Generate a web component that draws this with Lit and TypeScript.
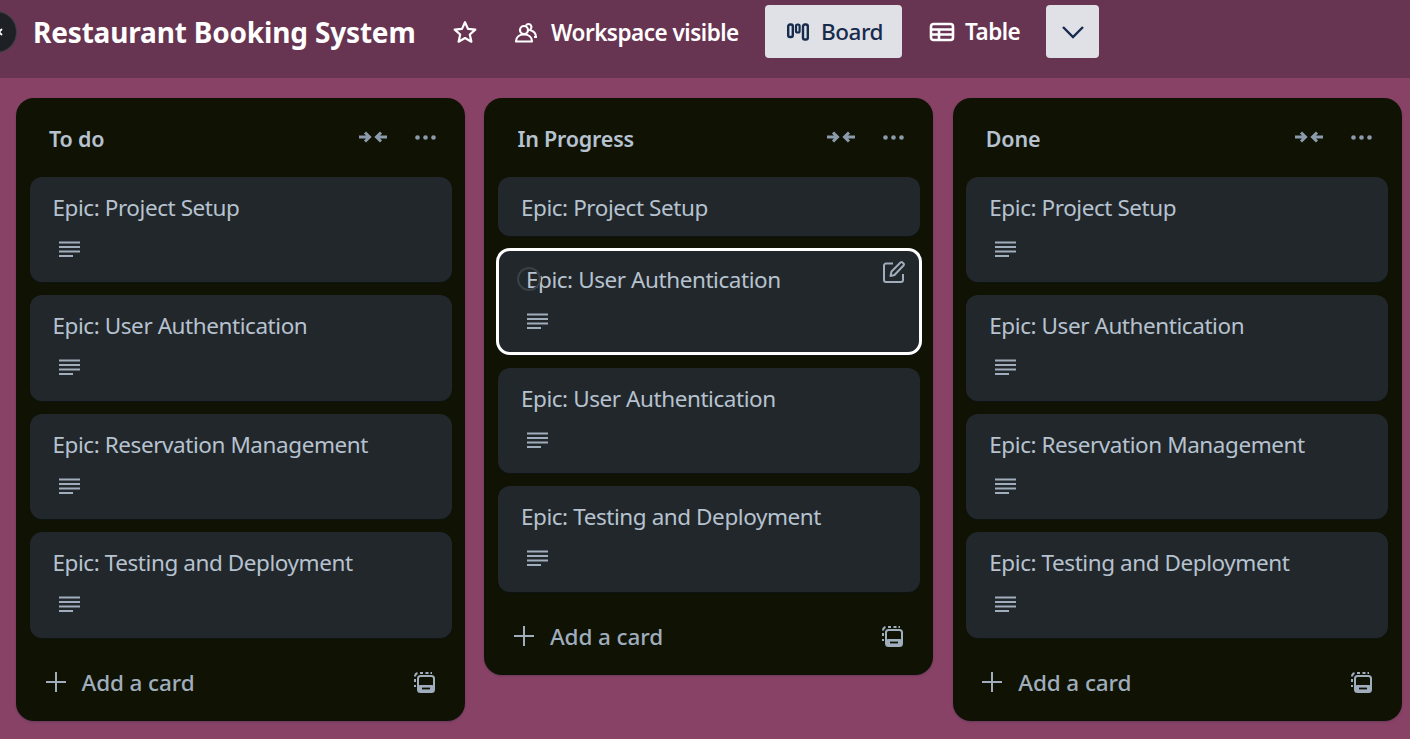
import { LitElement, html, css, svg } from 'lit';
import { customElement } from 'lit/decorators.js';

const lists = [
    { title: 'To do', cards: [
        { name: 'Epic: Project Setup', desc: true },
        { name: 'Epic: User Authentication', desc: true },
        { name: 'Epic: Reservation Management', desc: true },
        { name: 'Epic: Testing and Deployment', desc: true },
    ] },
    { title: 'In Progress', cards: [
        { name: 'Epic: Project Setup', desc: false },
        { name: 'Epic: User Authentication', desc: true, active: true },
        { name: 'Epic: User Authentication', desc: true },
        { name: 'Epic: Testing and Deployment', desc: true },
    ] },
    { title: 'Done', cards: [
        { name: 'Epic: Project Setup', desc: true },
        { name: 'Epic: User Authentication', desc: true },
        { name: 'Epic: Reservation Management', desc: true },
        { name: 'Epic: Testing and Deployment', desc: true },
    ] },
];

const icon = (w: number, h: number, body: unknown) => html`<svg width="${w}" height="${h}" viewBox="0 0 ${w} ${h}" fill="none">${body}</svg>`;

const caret = icon(6, 8, svg`<path d="M5 1L2 4l3 3" stroke="currentColor" stroke-width="1.800"/>`);
const star = icon(24, 24, svg`<path d="M12 2.200l3 6.700 7.300.7-5.500 4.900 1.600 7.200-6.400-3.700-6.400 3.700 1.600-7.200-5.500-4.900 7.300-.7z" stroke="currentColor" stroke-width="2.200" stroke-linejoin="round"/>`);
const people = icon(24, 24, svg`<circle cx="10" cy="9" r="4" stroke="currentColor" stroke-width="2.200"/><path d="M2 20.500c0-4 3-7 8-7s8 3 8 7z" stroke="currentColor" stroke-width="2.200" stroke-linejoin="round"/><path d="M12 4.500C13 2.500 16 2.500 17 4.500c.8 1.700.2 3.500-1 4.500 3.500 1 6 3 6 7h-2" stroke="currentColor" stroke-width="2"/>`);
const board = icon(24, 20, svg`<rect x="2.200" y="2.500" width="4.600" height="12.500" rx="1.800" stroke="currentColor" stroke-width="2.400"/><rect x="10" y="2.500" width="3.600" height="8" rx="1.500" stroke="currentColor" stroke-width="2.200"/><rect x="17" y="2.500" width="4.800" height="15" rx="1.800" stroke="currentColor" stroke-width="2.400"/>`);
const table = icon(26, 20, svg`<rect x="2" y="2" width="22" height="16" rx="2.500" stroke="currentColor" stroke-width="2.600"/><path d="M2 7.500h22M2 12.500h22M10 7.500v10" stroke="currentColor" stroke-width="2.600"/>`);
const chevron = icon(24, 14, svg`<path d="M2 2l10 10L22 2" stroke="currentColor" stroke-width="2.400"/>`);
const collapse = icon(30, 14, svg`<path d="M1 7h10M7 2.500L11.500 7 7 11.500M29 7H19M23 2.500L18.500 7l4.500 4.500" stroke="currentColor" stroke-width="3"/>`);
const dots = icon(21, 5, svg`<circle cx="2.500" cy="2.500" r="2.300" fill="currentColor"/><circle cx="10.500" cy="2.500" r="2.300" fill="currentColor"/><circle cx="18.500" cy="2.500" r="2.300" fill="currentColor"/>`);
const plus = icon(20, 20, svg`<path d="M10 0v20M0 10h20" stroke="currentColor" stroke-width="2"/>`);
const template = icon(21, 21, svg`<path d="M1 15v-2M1 10V7M1 4.500C1 3 2 1.500 3.500 1M6 1h3M11.500 1h3M16.500 1h1.500" stroke="currentColor" stroke-width="2"/><rect x="4" y="4" width="16" height="16" rx="2.500" stroke="currentColor" stroke-width="2"/><rect x="4" y="13" width="16" height="7" rx="2" fill="currentColor"/><path d="M8 16.500h8" stroke="#101204" stroke-width="1.800"/>`);
const lines = icon(21, 17, svg`<path d="M0 1.500h21M0 6h21M0 10.500h21M0 15h14" stroke="currentColor" stroke-width="2"/>`);
const edit = icon(22, 22, svg`<path d="M10 2.500H3a2 2 0 0 0-2 2V19a2 2 0 0 0 2 2h15a2 2 0 0 0 2-2v-6" stroke="currentColor" stroke-width="2"/><path d="M7.500 15l1-4.500L17.500 1.500a1.500 1.500 0 0 1 2 0l1 1a1.500 1.500 0 0 1 0 2L11.500 14z" stroke="currentColor" stroke-width="2" stroke-linejoin="round"/>`);

@customElement('app-root')
export class AppRoot extends LitElement {
    static styles = css`
    :host {
        display: block;
        height: 739px;
        overflow: hidden;
        background: #874265;
        font-family: "Noto Sans", "Liberation Sans", sans-serif;
    }
    .top {
        display: flex;
        align-items: center;
        height: 78px;
        box-sizing: border-box;
        padding-bottom: 15px;
        background: #673551;
        color: #fff;
    }
    .back {
        display: flex;
        align-items: center;
        width: 42px;
        height: 42px;
        margin-left: -25px;
        padding-left: 21px;
        flex: none;
        border-radius: 50%;
        background: #1d2125;
        border: 1px solid #3a3f45;
        box-sizing: border-box;
    }
    .name {
        margin: 0 0 0 16px;
        font-size: 28px;
        font-weight: 700;
        white-space: nowrap;
        width: 382px;
        letter-spacing: -0.17px;
    }
    .tb {
        display: flex;
        align-items: center;
        height: 53px;
        box-sizing: border-box;
        border-radius: 4px;
        font-size: 22.5px;
        font-weight: 600;
        white-space: nowrap;
        letter-spacing: -0.5px;
    }
    .star { margin-left: 38px; }
    .vis { margin-left: 37px; gap: 13px; width: 251px; padding-top: 2px; }
    .board {
        width: 137px;
        justify-content: center;
        gap: 11px;
        background: #dfe1e6;
        color: #172b4d;
        font-weight: 500;
        padding-left: 2px;
    }
    .table { margin-left: 27px; gap: 10px; width: 117px; }
    .more {
        width: 53px;
        justify-content: center;
        background: #dfe1e6;
        color: #172b4d;
    }
    .board-area {
        display: flex;
        align-items: flex-start;
        gap: 19.4px;
        padding: 20px 7px 0 16px;
    }
    .list {
        flex: 0 0 449px;
        box-sizing: border-box;
        background: #101204;
        border-radius: 18px;
        box-shadow: 0 1px 2px #091e4240;
        padding: 0 13.5px;
        color: #b6c2cf;
    }
    .list-head {
        display: flex;
        align-items: center;
        height: 79px;
        box-sizing: border-box;
        padding: 0 16px 0 19.5px;
        font-size: 21.5px;
        font-weight: 600;
        letter-spacing: -0.2px;
    }
    .list-head h2 {
        flex: 1;
        margin: 0;
        font: inherit;
        padding-top: 1px;
    }
    .list-head .ic {
        display: flex;
        color: #8c9bab;
        padding-bottom: 1px;
    }
    .list-head .dots { margin-left: 27px; }
    .cards {
        display: flex;
        flex-direction: column;
        gap: 13.2px;
    }
    .card {
        position: relative;
        box-sizing: border-box;
        background: #22272b;
        border-radius: 12px;
        box-shadow: 0 1px 1px #091e4240;
        padding: 14px 23px 11.3px;
        font-size: 22.5px;
        letter-spacing: -0.43px;
    }
    .card.active {
        margin: -1.3px -2px -0.7px;
        padding: 15.3px 23px 12px 30px;
        outline: 3px solid #fff;
        outline-offset: -3px;
        border-radius: 14px;
    }
    .card-name {
        line-height: 34px;
        height: 34px;
        white-space: nowrap;
    }
    .desc {
        display: flex;
        align-items: center;
        height: 24px;
        margin: 12.5px 0 9.5px;
        padding-left: 6px;
        color: #9fadbc;
    }
    .card.active .desc { padding-left: 1px; }
    .spin {
        position: absolute;
        left: 21px;
        top: 19px;
        width: 24px;
        height: 24px;
        box-sizing: border-box;
        border: 2px solid #3a4046;
        border-radius: 50%;
    }
    .edit {
        position: absolute;
        right: 17px;
        top: 13px;
        display: flex;
        color: #9fadbc;
    }
    .list-foot {
        display: flex;
        align-items: center;
        height: 83.5px;
        box-sizing: border-box;
        padding: 5px 16.5px 0 16px;
        font-size: 22.5px;
        font-weight: 500;
        color: #9fadbc;
        letter-spacing: -0.1px;
    }
    .list-foot span {
        flex: 1;
        margin-left: 16px;
    }
    .list-foot svg { display: block; }
  `;

    render() {
        return html`
      <header class="top">
        <div class="back">${caret}</div>
        <h1 class="name">Restaurant Booking System</h1>
        <div class="tb star">${star}</div>
        <div class="tb vis">${people}Workspace visible</div>
        <div class="tb board">${board}Board</div>
        <div class="tb table">${table}Table</div>
        <div class="tb more">${chevron}</div>
      </header>
      <main class="board-area">
        ${lists.map((list) => html`
          <section class="list">
            <div class="list-head">
              <h2>${list.title}</h2>
              <div class="ic">${collapse}</div>
              <div class="ic dots">${dots}</div>
            </div>
            <div class="cards">
              ${list.cards.map((card) => html`
                <article class="card ${card.active ? 'active' : ''}">
                  ${card.active ? html`<div class="spin"></div><div class="edit">${edit}</div>` : ''}
                  <div class="card-name">${card.name}</div>
                  ${card.desc ? html`<div class="desc">${lines}</div>` : ''}
                </article>
              `)}
            </div>
            <div class="list-foot">
              ${plus}
              <span>Add a card</span>
              ${template}
            </div>
          </section>
        `)}
      </main>
    `;
    }
}
